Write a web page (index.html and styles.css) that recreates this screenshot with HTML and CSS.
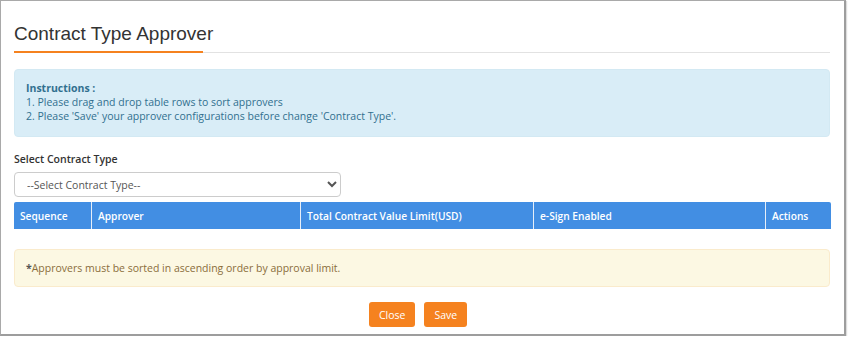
FILE: index.html
```html
<!DOCTYPE html>
<html lang="en">
<head>
    <meta charset="UTF-8">
    <title>Contract Type Approver</title>
    <link rel="stylesheet" href="styles.css">
</head>
<body>

<div class="frame">
    <!-- title -->
    <div class="title-bar">
        <h1>Contract Type Approver</h1>
    </div>

    <!-- instructions -->
    <div class="alert alert-info">
        <b>Instructions :</b><br>
        1. Please drag and drop table rows to sort approvers<br>
        2. Please 'Save' your approver configurations before change 'Contract Type'.
    </div>

    <label class="field-label" for="contractType">Select Contract Type</label>
    <select id="contractType" class="select">
        <option>--Select Contract Type--</option>
    </select>

    <table class="approver-table">
        <thead>
            <tr>
                <th class="col-seq">Sequence</th>
                <th class="col-approver">Approver</th>
                <th class="col-limit">Total Contract Value Limit(USD)</th>
                <th class="col-esign">e-Sign Enabled</th>
                <th>Actions</th>
            </tr>
        </thead>
    </table>

    <div class="alert alert-warning">
        <b>*</b>Approvers must be sorted in ascending order by approval limit.
    </div>

    <div class="buttons">
        <button class="btn">Close</button>
        <button class="btn">Save</button>
    </div>
</div>

</body>
</html>
```

FILE: styles.css
```css
body {
    margin: 0;
    background: #fff;
    font-family: "Open Sans", Arial, sans-serif;
    font-size: 10.5px;
    color: #333;
}
.frame {
    box-sizing: border-box;
    width: 846px;
    height: 336px;
    padding: 14px 14px 0 13px;
    border: 1px solid #a9a9a9;
    border-right: 2px solid #9d9d9d;
    border-bottom: 2px solid #9d9d9d;
    box-shadow: 1px 1px 1px #ddd;
    overflow: hidden;
}
.title-bar {
    border-bottom: 1px solid #e2e2e2;
    height: 37px;
}
.title-bar h1 {
    display: inline-block;
    box-sizing: border-box;
    margin: 0;
    padding: 7px 0 0 0;
    height: 37px;
    font-family: "Liberation Sans", Arial, sans-serif;
    font-weight: normal;
    font-size: 19px;
    white-space: nowrap;
    color: #333;
    border-bottom: 2px solid #f5821f;
    width: 189px;
    position: relative;
    top: 1px;
}
.alert {
    border-radius: 4px;
    border: 1px solid transparent;
}
.alert-info {
    margin-top: 16px;
    background: #d9edf7;
    border-color: #d3e9f3;
    color: #31708f;
    padding: 11px 11px 12px 11px;
    line-height: 14px;
    height: 43px;
}
.field-label {
    display: block;
    margin-top: 15px;
    font-weight: 600;
    color: #333;
    line-height: 14px;
}
.select {
    display: block;
    margin-top: 6px;
    width: 327px;
    height: 25px;
    border: 1px solid #ccc;
    border-radius: 4px;
    background: #fff;
    font-family: "Open Sans", Arial, sans-serif;
    font-size: 10.5px;
    color: #555;
    padding: 0 8px;
}
.approver-table {
    margin-top: 5px;
    width: 817px;
    border-collapse: collapse;
}
.approver-table th {
    background: #428ee3;
    color: #fff;
    font-weight: 600;
    font-size: 10.2px;
    text-align: left;
    height: 27px;
    padding: 0 6px;
    border-left: 1px solid #e6eef8;
}
.approver-table th:first-child {
    border-left: none;
    border-top-left-radius: 2px;
}
.approver-table th:last-child {
    border-top-right-radius: 2px;
}
.col-seq {
    width: 65px;
}
.col-approver {
    width: 196px;
}
.col-limit {
    width: 220px;
}
.col-esign {
    width: 219px;
}
.alert-warning {
    margin-top: 20px;
    background: #fcf8e3;
    border-color: #faebcc;
    color: #8a6d3b;
    padding: 11px 11px;
    line-height: 14px;
}
.alert-warning b {
    color: #555;
}
.buttons {
    display: flex;
    justify-content: center;
    gap: 9px;
    margin-top: 15px;
    padding-right: 8px;
}
.btn {
    background: #f5821f;
    color: #fff;
    border: none;
    border-radius: 3px;
    font-family: "Open Sans", Arial, sans-serif;
    font-size: 10.5px;
    height: 25px;
    padding: 0 10px;
}
```
